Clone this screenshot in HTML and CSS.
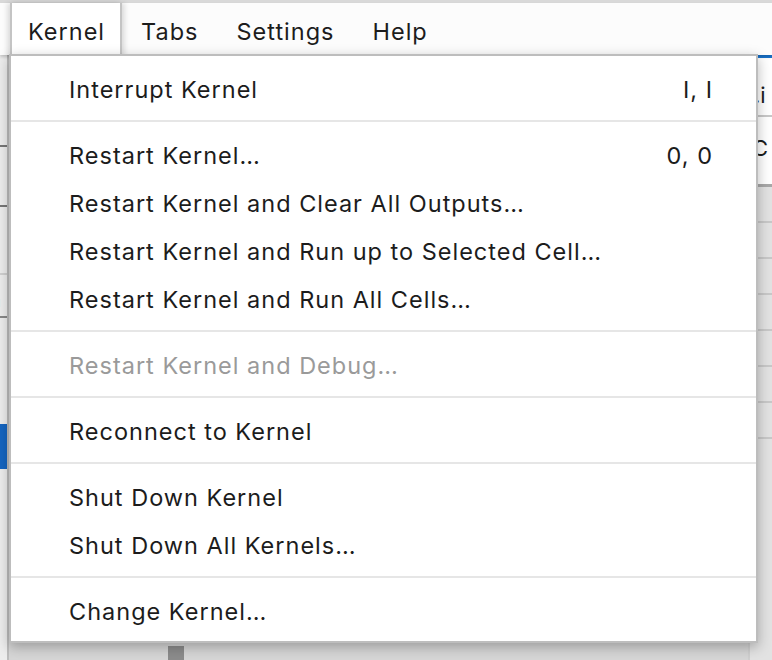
FILE: index.html
```html
<!DOCTYPE html>
<html>
<head>
<meta charset="utf-8">
<link rel="stylesheet" href="styles.css">
</head>
<body>
<div class="app">
  <div class="topstrip"></div>
  <div class="menubar">
    <div class="mb-item active">Kernel</div>
    <div class="mb-item">Tabs</div>
    <div class="mb-item">Settings</div>
    <div class="mb-item">Help</div>
  </div>
  <div class="main">
    <div class="leftpanel">
      <div class="lp-row lp-a"></div>
      <div class="lp-row lp-b"></div>
      <div class="lp-row lp-c"></div>
      <div class="lp-row lp-d">a</div>
      <div class="lp-gap"></div>
      <div class="lp-row lp-sel">n</div>
    </div>
    <div class="center">
      <div class="scroll-thumb"></div>
    </div>
    <div class="rightpanel">
      <div class="rp-tab">.i</div>
      <div class="rp-toolbar">C</div>
      <div class="rp-row"></div>
      <div class="rp-row"></div>
      <div class="rp-row"></div>
      <div class="rp-row"></div>
      <div class="rp-row"></div>
      <div class="rp-row"></div>
      <div class="rp-row"></div>
    </div>
  </div>
</div>

<div class="menu">
  <div class="mi"><span class="label">Interrupt Kernel</span><span class="key">I, I</span></div>
  <div class="sep"></div>
  <div class="mi"><span class="label">Restart Kernel…</span><span class="key">0, 0</span></div>
  <div class="mi"><span class="label">Restart Kernel and Clear All Outputs…</span></div>
  <div class="mi"><span class="label">Restart Kernel and Run up to Selected Cell…</span></div>
  <div class="mi"><span class="label">Restart Kernel and Run All Cells…</span></div>
  <div class="sep"></div>
  <div class="mi disabled"><span class="label">Restart Kernel and Debug…</span></div>
  <div class="sep"></div>
  <div class="mi"><span class="label">Reconnect to Kernel</span></div>
  <div class="sep"></div>
  <div class="mi"><span class="label">Shut Down Kernel</span></div>
  <div class="mi"><span class="label">Shut Down All Kernels…</span></div>
  <div class="sep"></div>
  <div class="mi"><span class="label">Change Kernel…</span></div>
</div>
</body>
</html>
```

FILE: styles.css
```css
* { box-sizing: border-box; }
html, body {
  margin: 0;
  padding: 0;
  width: 772px;
  height: 660px;
  overflow: hidden;
  background: #e4e4e4;
  font-family: Inter, "Liberation Sans", sans-serif;
  color: #1c1c1c;
}
.app {
  display: flex;
  flex-direction: column;
  height: 660px;
}
.topstrip {
  height: 3px;
  background: #d9d9d9;
}
.menubar {
  height: 52px;
  display: flex;
  align-items: stretch;
  background: #fcfcfc;
  padding-left: 10px;
  box-shadow: 0 2px 3px rgba(0,0,0,0.18);
  position: relative;
  z-index: 1;
  font-size: 23.5px;
  letter-spacing: 1px;
}
.mb-item {
  display: flex;
  align-items: center;
  padding: 5px 19px 0 19px;
  color: #1c1c1c;
}
.mb-item.active {
  background: #fff;
  border-left: 2px solid #c4c4c4;
  border-right: 2px solid #c4c4c4;
  padding: 5px 15px 3px 16px;
  margin-bottom: -3px;
  position: relative;
  z-index: 5;
  box-shadow: -3px 0 5px rgba(0,0,0,0.12), 3px 0 5px rgba(0,0,0,0.12);
}
.main {
  flex: 1;
  display: flex;
}
.leftpanel {
  width: 9px;
  background: #ededed;
  border-right: 2px solid #bdbdbd;
  display: flex;
  flex-direction: column;
  padding-top: 90px;
  font-size: 22px;
  font-weight: 700;
  overflow: hidden;
}
.lp-row { height: 60px; border-bottom: 2px solid #777; flex-shrink: 0; }
.lp-a { height: 2px; }
.lp-b { height: 60px; }
.lp-c { height: 68px; border-bottom: 2px solid #d0d0d0; }
.lp-d { height: 43px; border-bottom: 2px solid #888; line-height: 48px; text-indent: -12px; }
.lp-gap { height: 106px; flex-shrink: 0; }
.lp-sel { height: 45px; background: #1565c0; color: #fff; border: none; line-height: 48px; text-indent: -14px; font-weight: 400; }
.center {
  flex: 1;
  background: #d6d6d6;
  position: relative;
}
.scroll-thumb {
  position: absolute;
  left: 159px;
  bottom: 0;
  width: 16px;
  height: 14px;
  background: #8c8c8c;
}
.rightpanel {
  width: 24px;
  background: #e2e2e2;
  border-left: 2px solid #cfcfcf;
  display: flex;
  flex-direction: column;
  font-size: 22px;
  overflow: hidden;
}
.rp-tab {
  height: 62px;
  background: #fff;
  border-top: 3px solid #1976d2;
  border-bottom: 2px solid #c8c8c8;
  padding: 24px 0 0 4px;
  white-space: nowrap;
}
.rp-toolbar {
  height: 70px;
  background: #fff;
  border-bottom: 3px solid #a8a8a8;
  padding: 18px 0 0 2px;
}
.rp-row {
  height: 36px;
  border-bottom: 2px solid #c8c8c8;
}
.menu {
  position: absolute;
  left: 9px;
  top: 54px;
  width: 749px;
  background: #fff;
  border: 2px solid #bdbdbd;
  box-shadow: 0 4px 12px rgba(0,0,0,0.28);
  padding: 9px 0 6px 0;
  z-index: 4;
  font-size: 23.5px;
  letter-spacing: 1px;
}
.mi {
  height: 48px;
  display: flex;
  align-items: center;
  padding: 0 43px 0 58px;
  color: #1c1c1c;
}
.mi .label { flex: 1; white-space: nowrap; }
.mi .key { white-space: nowrap; }
.mi.disabled { color: #9a9a9a; }
.sep {
  height: 2px;
  background: #e6e6e6;
  margin: 7px 0 9px 0;
}
```
